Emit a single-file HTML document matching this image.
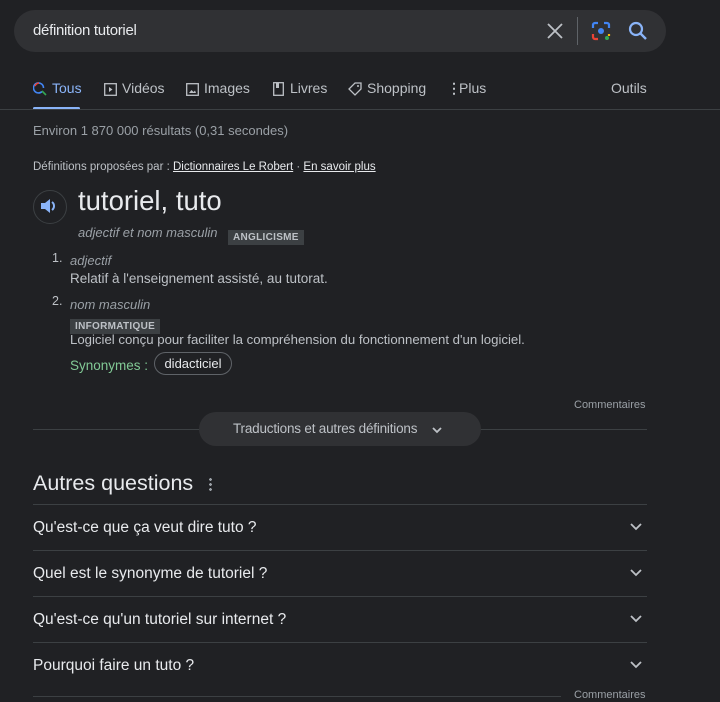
<!DOCTYPE html>
<html><head><meta charset="utf-8"><style>
body{margin:0;background:#202124;width:720px;height:702px;overflow:hidden;font-family:"Liberation Sans",sans-serif;color:#e8eaed;position:relative}
.a{position:absolute;white-space:nowrap}
.line{position:absolute;height:1px;background:#3c4043}
.tab{position:absolute;top:80px;font-size:14px;color:#bdc1c6}
.q{position:absolute;left:33px;font-size:15.5px;color:#e8eaed}
.chev{position:absolute;left:629px}
.tag{display:inline-block;background:#3c4043;color:#bdc1c6;font-size:10px;font-weight:bold;padding:1px 5px;letter-spacing:0.3px;line-height:13px}
</style></head><body>
<div class="a" style="left:14px;top:10px;width:652px;height:42px;border-radius:21px;background:#303134"></div>
<div class="a" style="left:33px;top:22px;font-size:15px;color:#e8eaed;letter-spacing:-0.3px">définition tutoriel</div>
<svg class="a" style="left:546px;top:22px" width="18" height="18" viewBox="0 0 18 18"><path d="M2 2L16 16M16 2L2 16" stroke="#bdc1c6" stroke-width="1.8"/></svg>
<div class="a" style="left:577px;top:17px;width:1px;height:28px;background:#5f6368"></div>
<svg class="a" style="left:590px;top:20px" width="22" height="22" viewBox="0 0 22 22"><path d="M3 8V5a2 2 0 0 1 2-2h3" stroke="#4285f4" stroke-width="2.2" fill="none"/><path d="M14 3h3a2 2 0 0 1 2 2v3" stroke="#4285f4" stroke-width="2.2" fill="none"/><path d="M3 14v3a2 2 0 0 0 2 2h3" stroke="#ea4335" stroke-width="2.2" fill="none"/><path d="M19 14v2" stroke="#fbbc04" stroke-width="2.2"/><circle cx="11" cy="11" r="3" fill="#4285f4"/><circle cx="17" cy="18" r="2" fill="#34a853"/></svg>
<svg class="a" style="left:627px;top:20px" width="22" height="22" viewBox="0 0 22 22"><circle cx="9" cy="9" r="6" stroke="#8ab4f8" stroke-width="2.2" fill="none"/><path d="M13.5 13.5L19 19" stroke="#8ab4f8" stroke-width="2.4"/></svg>

<svg class="a" style="left:33px;top:82px" width="14" height="14" viewBox="0 0 14 14"><path d="M9 9.5A5 5 0 1 1 10.5 6" stroke="#4285f4" stroke-width="1.6" fill="none"/><path d="M2 4A5 5 0 0 1 6 1" stroke="#ea4335" stroke-width="1.6" fill="none"/><path d="M9 9l4 4" stroke="#34a853" stroke-width="1.6"/></svg>
<div class="tab" style="left:52px;color:#8ab4f8">Tous</div>
<div class="a" style="left:33px;top:107px;width:47px;height:3px;background:#8ab4f8;border-radius:2px"></div>
<svg class="a" style="left:104px;top:83px" width="13" height="13"><rect x="0.7" y="0.7" width="11.6" height="11.6" fill="none" stroke="#bdc1c6" stroke-width="1.3"/><path d="M5 4l3.5 2.5L5 9z" fill="#bdc1c6"/></svg>
<div class="tab" style="left:122px">Vidéos</div>
<svg class="a" style="left:186px;top:83px" width="13" height="13"><rect x="0.7" y="0.7" width="11.6" height="11.6" fill="none" stroke="#bdc1c6" stroke-width="1.3"/><path d="M3 10l2.5-3 2 2 1.5-1.5L10 10z" fill="#bdc1c6"/></svg>
<div class="tab" style="left:204px">Images</div>
<svg class="a" style="left:273px;top:82px" width="11" height="14"><rect x="0.7" y="0.7" width="9.6" height="12.6" fill="none" stroke="#bdc1c6" stroke-width="1.3"/><rect x="3" y="1" width="3" height="5" fill="#bdc1c6"/></svg>
<div class="tab" style="left:290px">Livres</div>
<svg class="a" style="left:348px;top:82px" width="14" height="14" viewBox="0 0 14 14"><path d="M7 1h6v6l-6 6-6-6z" fill="none" stroke="#bdc1c6" stroke-width="1.3"/><circle cx="10" cy="4" r="1" fill="#bdc1c6"/></svg>
<div class="tab" style="left:367px">Shopping</div>
<div class="tab" style="left:447px;font-weight:bold">⋮</div>
<div class="tab" style="left:459px">Plus</div>
<div class="tab" style="left:611px">Outils</div>
<div class="line" style="left:0;top:109px;width:720px"></div>

<div class="a" style="left:33px;top:123px;font-size:13px;color:#9aa0a6">Environ 1 870 000 résultats (0,31 secondes)</div>
<div class="a" style="left:33px;top:161px;font-size:11.5px;color:#bdc1c6">Définitions proposées par : <u style="color:#e8eaed">Dictionnaires Le Robert</u> · <u style="color:#e8eaed">En savoir plus</u></div>
<div class="a" style="left:33px;top:190px;width:32px;height:32px;border-radius:50%;border:1px solid #3c4043"></div>
<svg class="a" style="left:40px;top:198px" width="18" height="16" viewBox="0 0 18 16"><path d="M1 5h4l5-4v14l-5-4H1z" fill="#8ab4f8"/><path d="M12 4a5 5 0 0 1 0 8" stroke="#8ab4f8" stroke-width="2" fill="none"/></svg>
<div class="a" style="left:78px;top:185px;font-size:27.5px;color:#e8eaed">tutoriel, tuto</div>
<div class="a" style="left:78px;top:225px;font-size:13px;color:#9aa0a6;font-style:italic">adjectif et nom masculin</div>
<div class="a" style="left:228px;top:227px"><span class="tag">ANGLICISME</span></div>
<div class="a" style="left:52px;top:251px;font-size:12.5px;color:#bdc1c6">1.</div>
<div class="a" style="left:70px;top:253px;font-size:13px;color:#9aa0a6;font-style:italic">adjectif</div>
<div class="a" style="left:70px;top:271px;font-size:13.5px;color:#bdc1c6">Relatif à l'enseignement assisté, au tutorat.</div>
<div class="a" style="left:52px;top:294px;font-size:12.5px;color:#bdc1c6">2.</div>
<div class="a" style="left:70px;top:297px;font-size:13px;color:#9aa0a6;font-style:italic">nom masculin</div>
<div class="a" style="left:70px;top:316px"><span class="tag">INFORMATIQUE</span></div>
<div class="a" style="left:70px;top:332px;font-size:13.2px;color:#bdc1c6">Logiciel conçu pour faciliter la compréhension du fonctionnement d'un logiciel.</div>
<div class="a" style="left:70px;top:358px;font-size:13.5px;color:#81c995">Synonymes :</div>
<div class="a" style="left:154px;top:352px;width:76px;height:21px;border:1px solid #5f6368;border-radius:12px;font-size:13px;color:#e8eaed;text-align:center;line-height:21px">didacticiel</div>

<div class="a" style="left:574px;top:399px;font-size:11px;color:#9aa0a6">Commentaires</div>
<div class="line" style="left:33px;top:429px;width:614px"></div>
<div class="a" style="left:199px;top:412px;width:282px;height:34px;border-radius:17px;background:#303134"></div>
<div class="a" style="left:233px;top:421px;font-size:13.5px;color:#bdc1c6;letter-spacing:-0.2px">Traductions et autres définitions</div>
<svg class="a" style="left:431px;top:425px" width="12" height="10"><path d="M2 3l4 4 4-4" stroke="#bdc1c6" stroke-width="1.8" fill="none"/></svg>

<div class="a" style="left:33px;top:471px;font-size:21.5px;color:#e8eaed">Autres questions</div>
<div class="a" style="left:209px;top:477px;width:3px;height:14px;background:radial-gradient(circle,#9aa0a6 1.3px,transparent 1.5px) 0 0/3px 5px"></div>
<div class="line" style="left:33px;top:504px;width:614px"></div>
<div class="q" style="top:519px">Qu'est-ce que ça veut dire tuto ?</div>
<div class="line" style="left:33px;top:550px;width:614px"></div>
<div class="q" style="top:565px">Quel est le synonyme de tutoriel ?</div>
<div class="line" style="left:33px;top:596px;width:614px"></div>
<div class="q" style="top:611px">Qu'est-ce qu'un tutoriel sur internet ?</div>
<div class="line" style="left:33px;top:642px;width:614px"></div>
<div class="q" style="top:657px">Pourquoi faire un tuto ?</div>
<div class="line" style="left:33px;top:696px;width:528px"></div>
<div class="a" style="left:574px;top:689px;font-size:11px;color:#9aa0a6">Commentaires</div>
<svg class="chev" style="top:522px" width="14" height="10"><path d="M2 2l5 5 5-5" stroke="#bdc1c6" stroke-width="1.8" fill="none"/></svg>
<svg class="chev" style="top:568px" width="14" height="10"><path d="M2 2l5 5 5-5" stroke="#bdc1c6" stroke-width="1.8" fill="none"/></svg>
<svg class="chev" style="top:614px" width="14" height="10"><path d="M2 2l5 5 5-5" stroke="#bdc1c6" stroke-width="1.8" fill="none"/></svg>
<svg class="chev" style="top:660px" width="14" height="10"><path d="M2 2l5 5 5-5" stroke="#bdc1c6" stroke-width="1.8" fill="none"/></svg>
</body></html>
